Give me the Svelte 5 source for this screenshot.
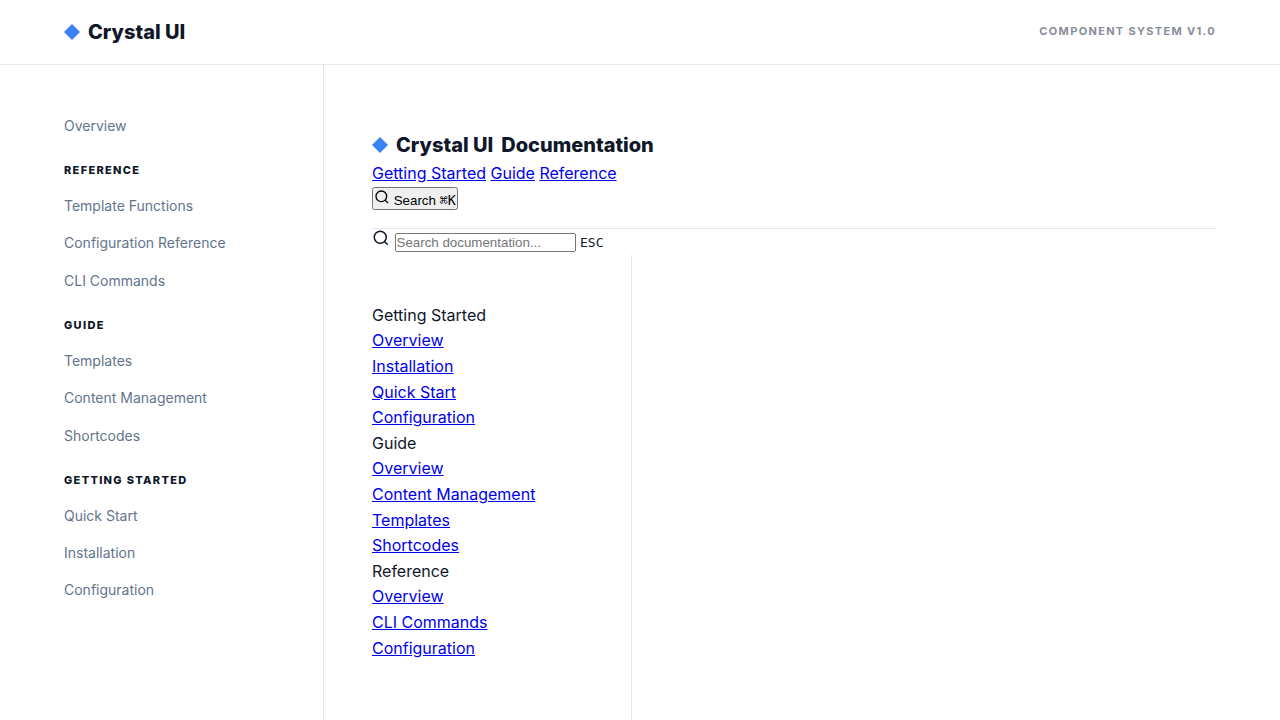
<script lang="ts">
  const sidebarGroups = [
    { title: 'Reference', links: ['Template Functions', 'Configuration Reference', 'CLI Commands'] },
    { title: 'Guide', links: ['Templates', 'Content Management', 'Shortcodes'] },
    { title: 'Getting Started', links: ['Quick Start', 'Installation', 'Configuration'] },
  ];

  const docSections = [
    { title: 'Getting Started', links: ['Overview', 'Installation', 'Quick Start', 'Configuration'] },
    { title: 'Guide', links: ['Overview', 'Content Management', 'Templates', 'Shortcodes'] },
    { title: 'Reference', links: ['Overview', 'CLI Commands', 'Configuration'] },
  ];

  let query = $state('');
  let searchInput: HTMLInputElement;
</script>

{#snippet searchIcon(size: number)}
  <svg width={size} height={size} viewBox="0 0 24 24" fill="none" stroke="currentColor" stroke-width="2" aria-hidden="true">
    <circle cx="11" cy="11" r="8" />
    <path d="m21 21-4.35-4.35" />
  </svg>
{/snippet}

<header class="site-header">
  <a class="logo" href="#top"><span class="logo-mark"></span>Crystal UI</a>
  <span class="version">Component System v1.0</span>
</header>

<div class="layout">
  <aside class="sidebar">
    <nav aria-label="Site">
      <a class="nav-link" href="#overview">Overview</a>
      {#each sidebarGroups as group}
        <h4 class="nav-title">{group.title}</h4>
        {#each group.links as link}
          <a class="nav-link" href="#{link}">{link}</a>
        {/each}
      {/each}
    </nav>
  </aside>

  <main class="content">
    <header class="docs-header">
      <a class="logo" href="#docs"><span class="logo-mark"></span><span>Crystal UI</span><span>Documentation</span></a>
      <nav aria-label="Sections">
        <a href="#getting-started">Getting Started</a>
        <a href="#guide">Guide</a>
        <a href="#reference">Reference</a>
      </nav>
      <div class="actions">
        <button type="button" onclick={() => searchInput.focus()}>
          {@render searchIcon(16)}
          <span>Search</span>
          <kbd>⌘K</kbd>
        </button>
      </div>
    </header>

    <div class="search-row">
      {@render searchIcon(18)}
      <input type="text" placeholder="Search documentation..." aria-label="Search documentation" bind:value={query} bind:this={searchInput} />
      <kbd>ESC</kbd>
    </div>

    <aside class="docs-nav">
      {#each docSections as section}
        <div>{section.title}</div>
        {#each section.links as link}
          <div><a href="#{section.title}-{link}">{link}</a></div>
        {/each}
      {/each}
    </aside>
  </main>
</div>

<style>
  :global(body) {
    background: #fff;
    color: #0f172a;
    font-family: Inter, sans-serif;
    line-height: 1.6;
    overflow: hidden;
  }

  .site-header {
    display: flex;
    align-items: center;
    justify-content: space-between;
    height: 64px;
    padding: 0 64px;
    border-bottom: 1px solid #e2e8f0;
  }

  .logo {
    display: flex;
    align-items: center;
    gap: 8px;
    color: #0f172a;
    font-size: 20px;
    font-weight: 800;
    text-decoration: none;
  }

  .logo-mark {
    width: 16px;
    height: 16px;
    background: #3b82f6;
    clip-path: polygon(50% 0, 100% 50%, 50% 100%, 0 50%);
  }

  .version {
    color: #888e99;
    font-size: 11px;
    font-weight: 700;
    letter-spacing: 0.12em;
    text-transform: uppercase;
  }

  .layout {
    display: grid;
    grid-template-columns: 324px 1fr;
    min-height: calc(100vh - 65px);
  }

  .sidebar {
    padding: 48px 32px 48px 64px;
    border-right: 1px solid #e2e8f0;
  }

  .nav-link {
    display: block;
    margin-bottom: 11px;
    padding: 2px 0;
    color: #64748b;
    font-size: 14px;
    text-decoration: none;
  }

  .nav-title {
    margin: 23px 0 13px;
    font-size: 11px;
    font-weight: 800;
    letter-spacing: 0.12em;
    text-transform: uppercase;
  }

  .content {
    display: flex;
    flex-direction: column;
    padding: 64px 64px 0 48px;
  }

  .docs-header {
    padding-bottom: 16px;
    border-bottom: 1px solid #e2e8f0;
  }

  .docs-nav {
    flex: 1;
    width: 211px;
    padding: 48px 48px 48px 0;
    border-right: 1px solid #e2e8f0;
  }

  button,
  input {
    padding: 0;
  }
</style>
